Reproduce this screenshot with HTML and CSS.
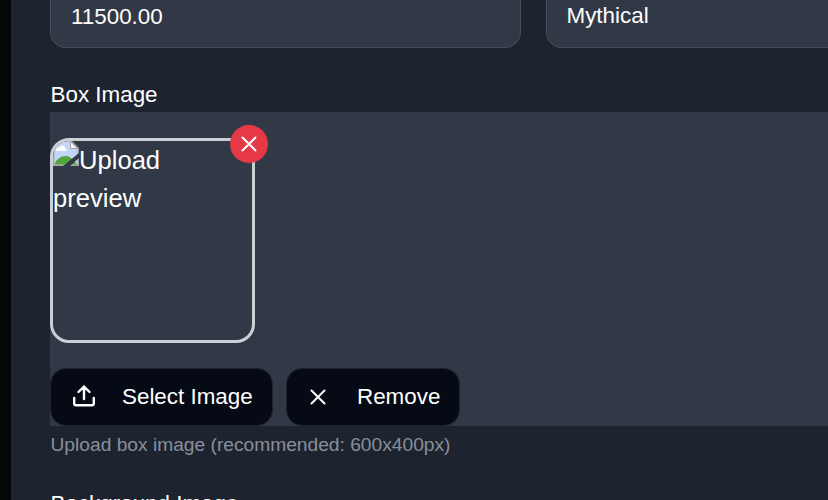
FILE: index.html
```html
<!DOCTYPE html>
<html lang="en">
<head>
<meta charset="utf-8">
<title>Edit box</title>
<link rel="stylesheet" href="styles.css">
</head>
<body>
<main class="panel">
  <div class="fields">
    <div class="field">11500.00</div>
    <div class="field field-select">Mythical</div>
  </div>
  <section class="upload">
    <div class="label">Box Image</div>
    <div class="upload-body">
      <div class="preview">
        <div class="preview-image"><svg class="broken" viewBox="0 0 26 26" aria-hidden="true">
          <path d="M0 0H18L26 8V26H0Z" fill="#a5a5a5"/>
          <path d="M1.500 1.500H17V9H24.500V24.500H1.500Z" fill="#c3d6f7"/>
          <path d="M18 2.500V8H23.500Z" fill="#f5f5f5"/>
          <path d="M3 11C3 8 5 7 6.500 7.500C8 4 12 5.500 12 8C14 8 14 11 13 11Z" fill="#fff"/>
          <path d="M1.500 24.500C3 19 8 16 12.500 16C16 16 18 18 20 20L24.500 24.500Z" fill="#55a63a"/>
          <path d="M10 26L26 13V18L17 26Z" fill="#323946"/>
        </svg>Upload preview</div>
        <button class="clear" aria-label="Remove image"><svg viewBox="0 0 16 16"><path d="M1.500 1.500L14.500 14.500M14.500 1.500L1.500 14.500"/></svg></button>
      </div>
      <div class="actions">
        <button class="button"><svg class="icon-upload" viewBox="0 0 22 22"><path d="M11 14V1.500M5.500 7L11 1.500L16.500 7M1.200 13V18.500Q1.200 20.300 3.200 20.300H18.800Q20.800 20.300 20.800 18.500V13"/></svg>Select Image</button>
        <button class="button button-remove"><svg class="icon-x" viewBox="0 0 16 16"><path d="M1.500 1.500L14.500 14.500M14.500 1.500L1.500 14.500"/></svg>Remove</button>
      </div>
    </div>
    <div class="hint">Upload box image (recommended: 600x400px)</div>
  </section>
  <div class="label label-next">Background Image</div>
</main>
</body>
</html>
```
FILE: styles.css
```css
* { box-sizing: border-box; }
body {
  margin: 0;
  height: 500px;
  overflow: hidden;
  padding-left: 11px;
  background: #05060a;
  color: #fff;
  font: 22.4px/32px "Liberation Sans", Arial, sans-serif;
}
.panel {
  height: 500px;
  padding-left: 38px;
  border-left: 1px solid #22262f;
  background: #1e242f;
  overflow: hidden;
}
.fields { display: flex; gap: 25px; width: 967px; }
.field {
  width: 471px;
  height: 48px;
  padding: 1px 20px;
  border: 1px solid #454b59;
  border-top: 0;
  border-radius: 0 0 16px 16px;
  background: #323946;
}
.field-select { padding-top: 0; padding-left: 19.500px; }
.upload { padding-top: 31px; }
.label { height: 33px; padding-left: 0.500px; }
.upload-body { height: 314px; padding-top: 26px; background: #323946; }
.preview { position: relative; width: 205px; height: 205px; }
.preview-image {
  height: 205px;
  overflow: hidden;
  border: 3px solid #cbd0d6;
  border-radius: 19px;
  font-size: 25.6px;
  line-height: 38px;
}
.broken { width: 26px; height: 26px; margin-top: -4px; vertical-align: 3px; }
.clear {
  position: absolute;
  top: -13px;
  right: -13px;
  width: 38px;
  height: 38px;
  padding: 0;
  display: grid;
  place-items: center;
  border: 0;
  border-radius: 50%;
  background: #e63946;
  color: #fff;
}
svg { flex: none; }
.clear svg, .icon-x { width: 16px; height: 16px; }
.clear path, .button path {
  fill: none;
  stroke: currentColor;
  stroke-width: 2;
  stroke-linecap: round;
  stroke-linejoin: round;
}
.button .icon-upload path { stroke-width: 2.400; }
.actions { display: flex; gap: 13px; padding-top: 25px; }
.button {
  display: flex;
  align-items: center;
  width: 223px;
  height: 58px;
  padding: 0 0 1px 22px;
  border: 1px solid #1e242f;
  border-radius: 16px;
  background: #060a14;
  color: #fff;
  font: inherit;
  white-space: nowrap;
}
.icon-upload { width: 22px; height: 22px; margin: 0 27.500px 1px -0.500px; overflow: visible; }
.button-remove { width: 174px; padding-left: 23px; }
.icon-x { margin-right: 31px; }
.hint { padding: 3px 0 0 0.500px; color: #898e9b; font-size: 19.2px; }
.label-next { margin-top: 27px; }
```
